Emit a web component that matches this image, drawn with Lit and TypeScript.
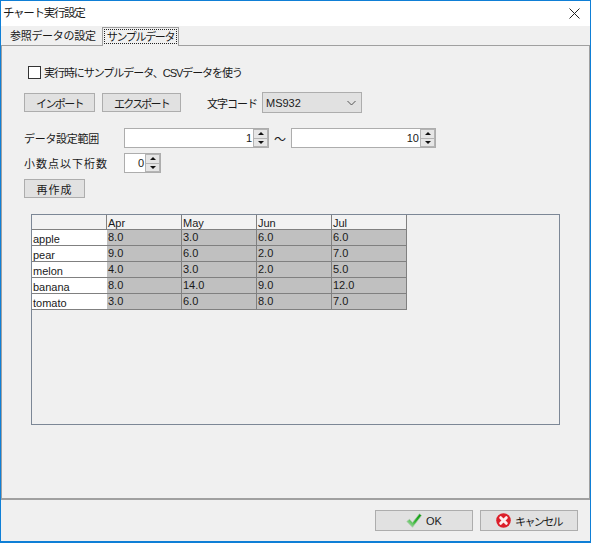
import { LitElement, html, css, svg } from "lit";
import { customElement } from "lit/decorators.js";

const cols = ["Apr", "May", "Jun", "Jul"];
const rows: [string, string[]][] = [
  ["apple", ["8.0", "3.0", "6.0", "6.0"]],
  ["pear", ["9.0", "6.0", "2.0", "7.0"]],
  ["melon", ["4.0", "3.0", "2.0", "5.0"]],
  ["banana", ["8.0", "14.0", "9.0", "12.0"]],
  ["tomato", ["3.0", "6.0", "8.0", "7.0"]],
];

@customElement("app-root")
export class AppRoot extends LitElement {
  static styles = css`
    :host {
      display: block;
      width: 591px;
      height: 543px;
      font-family: "Liberation Sans", "Noto Sans CJK JP", sans-serif;
      font-size: 11px;
      color: #1a1a1a;
      background: #f0f0f0;
    }
    * { box-sizing: border-box; }
    .win {
      width: 591px; height: 543px;
      border: 1px solid #0f7fd6;
      border-bottom-width: 2px;
      display: flex; flex-direction: column;
      background: #f0f0f0;
    }
    .title {
      height: 25px; flex: none; background: #fff;
      display: flex; align-items: center; justify-content: space-between;
      padding: 0 10px 0 2px; line-height: 25px;
    }
    .title span { letter-spacing: -1.300px; font-size: 11.500px; }
    .tabs { height: 19px; flex: none; display: flex; align-items: flex-end; padding-left: 8px; }
    .tab { height: 17px; width: 93px; line-height: 16px; padding: 0 1px; letter-spacing: -0.3px; white-space: nowrap; }
    .tab.on {
      height: 19px; width: 77px; margin-bottom: -1px; position: relative;
      border: 1px solid #a0a0a0; border-bottom: 0; background: #f0f0f0; padding: 1px 1px 0;
      z-index: 1;
    }
    .tab.on span { display: block; height: 15px; line-height: 14px; border: 1px dotted #222; text-align: center; white-space: nowrap; letter-spacing: -1.300px; }
    .panel {
      flex: none; height: 455px;
      border: 1px solid #a0a0a0; border-bottom-width: 2px; width: 589px;
      padding: 19px 0 0 22px;
      display: flex; flex-direction: column;
    }
    .chk { display: flex; align-items: center; gap: 3px; padding-left: 4px; height: 14px; }
    .chk span { letter-spacing: -1.050px; }
    .box { width: 13px; height: 13px; border: 1px solid #333; background: #fff; flex: none; }
    .r1 { display: flex; align-items: center; margin-top: 13px; height: 21px; }
    .btn {
      border: 1px solid #adadad; background: #e1e1e1; height: 19px;
      display: flex; align-items: center; justify-content: center; gap: 4px; white-space: nowrap;
    }
    .imp { width: 71px; letter-spacing: -1.600px; }
    .exp { width: 79px; margin-left: 7px; letter-spacing: -1.800px; }
    .lab2 { margin-left: 26px; width: 55px; white-space: nowrap; letter-spacing: -1px; }
    .combo {
      width: 100px; height: 21px; border: 1px solid #adadad; background: #e1e1e1;
      display: flex; align-items: center; justify-content: space-between; padding: 0 5px 0 3px;
    }
    .r2 { display: flex; align-items: center; height: 20px; }
    .r2.a { margin-top: 15px; }
    .r2.b { margin-top: 5px; }
    .lab { width: 100px; flex: none; letter-spacing: -0.3px; }
    .lab.w { letter-spacing: 1px; }
    .spin {
      height: 20px; border: 1px solid #adadad; background: #fff;
      display: flex; align-items: center; justify-content: flex-end; gap: 1px;
    }
    .arrows { width: 15px; height: 18px; display: flex; flex-direction: column; background: #fff; }
    .arrows i {
      flex: 1; background: #e6e6e6; border: 1px solid #b4b4b4; display: flex; align-items: center; justify-content: center;
    }
    .arrows i + i { margin-top: -1px; }
    .up { width: 0; height: 0; border: 3px solid transparent; border-top: 0; border-bottom: 3px solid #111; }
    .down { width: 0; height: 0; border: 3px solid transparent; border-bottom: 0; border-top: 3px solid #111; }
    .s1 { width: 145px; }
    .tilde { width: 22px; text-align: center; font-size: 12px; }
    .s2 { width: 145px; }
    .s3 { width: 37px; }
    .re { width: 61px; margin-top: 6px; letter-spacing: 1px; }
    .tablewrap {
      margin: 16px 0 0 7px; width: 529px; height: 211px;
      border: 1px solid #7c8796; background: #f0f0f0;
    }
    .grid {
      display: grid; grid-template-columns: repeat(5, 75px); grid-template-rows: 15px; grid-auto-rows: 16px;
      font-size: 11px; line-height: 15px; width: 375px;
    }
    .c { padding-left: 1px; border-right: 1px solid #808080; border-bottom: 1px solid #808080; white-space: nowrap; overflow: hidden; }
    .h { background: #f2f2f2; padding-top: 1px; }
    .rh { background: #fff; border-right: 0; padding-top: 2px; }
    .d { background: #c0c0c0; }
    .foot { flex: 1; display: flex; justify-content: flex-end; align-items: flex-start; padding: 10px 12px 0 0; gap: 7px; }
    .foot .btn { width: 98px; height: 21px; }
    .foot .k { letter-spacing: -1.600px; }
    .close { display: block; }
  `;

  private spin(v: string, cls: string) {
    return html`<div class="spin ${cls}"><span>${v}</span><div class="arrows"><i><b class="up"></b></i><i><b class="down"></b></i></div></div>`;
  }

  render() {
    return html`<div class="win">
      <div class="title"><span>チャート実行設定</span>
        <svg class="close" width="11" height="11" viewBox="0 0 11 11"><path d="M.5.5l10 10M10.500.5l-10 10" stroke="#222" fill="none"/></svg>
      </div>
      <div class="tabs"><div class="tab">参照データの設定</div><div class="tab on"><span>サンプルデータ</span></div></div>
      <div class="panel">
        <div class="chk"><div class="box"></div><span>実行時にサンプルデータ、CSVデータを使う</span></div>
        <div class="r1">
          <div class="btn imp">インポート</div><div class="btn exp">エクスポート</div>
          <div class="lab2">文字コード</div>
          <div class="combo"><span>MS932</span>
            <svg width="9" height="6" viewBox="0 0 9 6"><path d="M.5 1l4 4 4-4" fill="none" stroke="#555"/></svg>
          </div>
        </div>
        <div class="r2 a"><div class="lab">データ設定範囲</div>${this.spin("1", "s1")}<div class="tilde">～</div>${this.spin("10", "s2")}</div>
        <div class="r2 b"><div class="lab w">小数点以下桁数</div>${this.spin("0", "s3")}</div>
        <div class="btn re">再作成</div>
        <div class="tablewrap"><div class="grid">
          <div class="c h"></div>${cols.map((c) => html`<div class="c h">${c}</div>`)}
          ${rows.map(([n, vals]) => html`<div class="c rh">${n}</div>${vals.map((v) => html`<div class="c d">${v}</div>`)}`)}
        </div></div>
      </div>
      <div class="foot">
        <div class="btn">
          <svg width="16" height="15" viewBox="0 0 16 15"><defs><linearGradient id="g" x1="1" y1="0" x2="0" y2="1"><stop offset="0" stop-color="#0a9a0a"/><stop offset=".5" stop-color="#35b535"/><stop offset="1" stop-color="#c4e8c4"/></linearGradient></defs><path d="M.8 8.500l2.700-2.200 3 3.200L13.500.8l2 1.700L6.500 14.300z" fill="url(#g)" stroke="#a9c4a9" stroke-width=".7"/></svg>
          <span>OK</span></div>
        <div class="btn">
          <svg width="15" height="15" viewBox="0 0 15 15"><circle cx="7.500" cy="7.500" r="7.300" fill="#dc1f2a"/>${svg`<path d="M4.700 4.700l5.600 5.600M10.300 4.700l-5.600 5.600" stroke="#fdeeee" stroke-width="3" stroke-linecap="round"/>`}</svg>
          <span class="k">キャンセル</span></div>
      </div>
    </div>`;
  }
}
